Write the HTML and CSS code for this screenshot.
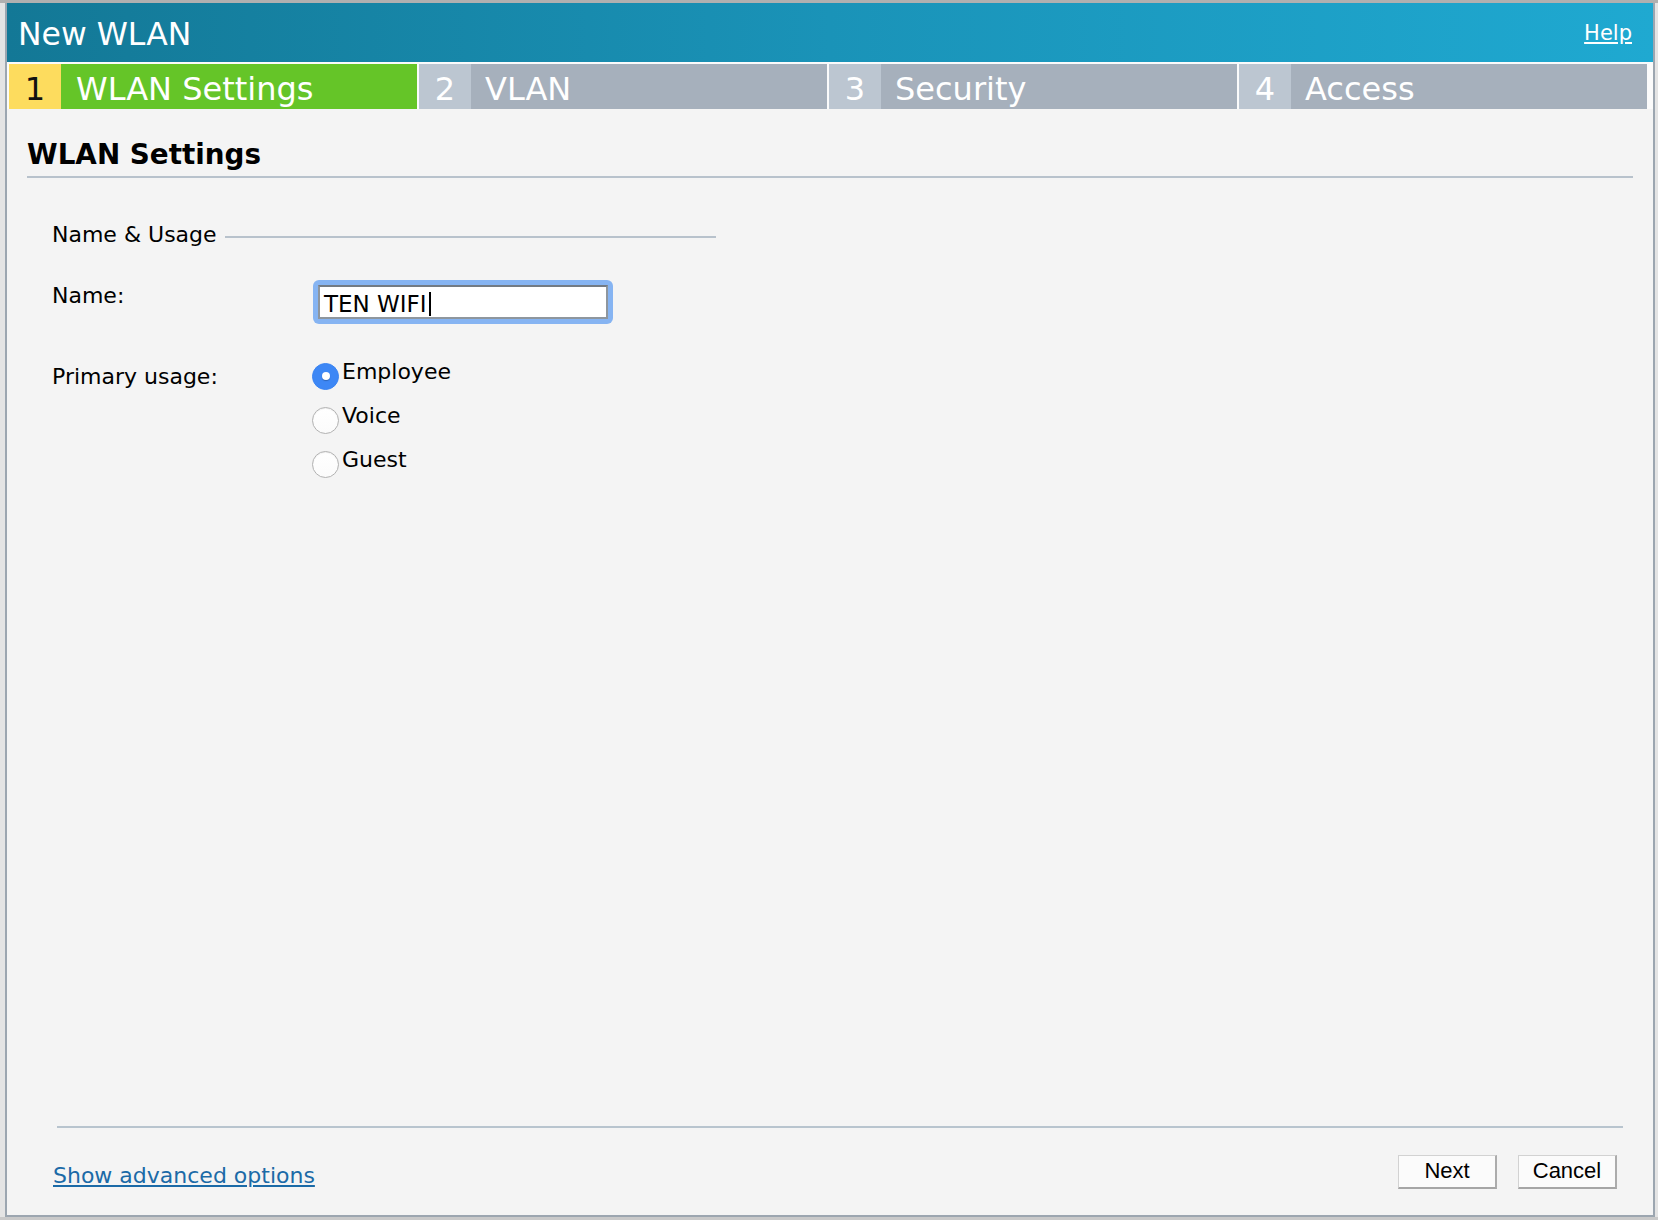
FILE: index.html
```html
<!DOCTYPE html>
<html lang="en">
<head>
<meta charset="utf-8">
<title>New WLAN</title>
<link rel="stylesheet" href="styles.css">
</head>
<body>
<div class="dialog">
  <div class="header">
    <div class="title">New WLAN</div>
    <a class="help" href="#">Help</a>
  </div>
  <div class="tabbar">
    <div class="tab active"><span class="num">1</span><span class="label">WLAN Settings</span></div>
    <div class="tab"><span class="num">2</span><span class="label">VLAN</span></div>
    <div class="tab"><span class="num">3</span><span class="label">Security</span></div>
    <div class="tab"><span class="num">4</span><span class="label">Access</span></div>
  </div>
  <div class="content">
    <h1 class="page-title">WLAN Settings</h1>
    <div class="fieldset">
      <div class="legend"><span class="legend-text">Name &amp; Usage</span><span class="legend-rule"></span></div>
      <div class="form">
        <div class="form-label first">Name:</div>
        <div class="focus-ring"><div class="field"><span class="field-text">TEN WIFI</span><span class="caret"></span></div></div>
        <div class="form-label second">Primary usage:</div>
        <div class="radios">
          <div class="radio-row"><span class="radio checked"></span><span class="radio-text">Employee</span></div>
          <div class="radio-row"><span class="radio"></span><span class="radio-text">Voice</span></div>
          <div class="radio-row"><span class="radio"></span><span class="radio-text">Guest</span></div>
        </div>
      </div>
    </div>
  </div>
  <div class="footer-rule"></div>
  <div class="footer">
    <a class="advanced" href="#">Show advanced options</a>
    <div class="buttons">
      <button class="btn">Next</button>
      <button class="btn">Cancel</button>
    </div>
  </div>
</div>
</body>
</html>
```

FILE: styles.css
```css
html, body {
  margin: 0;
  padding: 0;
}

body {
  width: 1658px;
  height: 1220px;
  overflow: hidden;
  position: relative;
  background: linear-gradient(#b0b0b0 0, #b0b0b0 3px, #e4e4e4 3px, #e4e4e4 1217px, #c9c9c9 1217px);
  font-family: "DejaVu Sans", Verdana, sans-serif;
  color: #000;
}

.dialog {
  position: relative;
  z-index: 1;
  margin: 3px 0 0 5px;
  width: 1650px;
  height: 1214px;
  box-sizing: border-box;
  border: 2px solid #9ca6b0;
  border-top: 0;
  background: #f4f4f4;
  display: flex;
  flex-direction: column;
}

.header {
  height: 59px;
  box-sizing: border-box;
  padding: 4px 21px 0 11px;
  display: flex;
  justify-content: space-between;
  align-items: flex-start;
  background: linear-gradient(to right, #137896, #1a93b8 50%, #1fa9d1);
  color: #fff;
}

.title {
  font-size: 31.5px;
  line-height: 55px;
}

.help {
  font-size: 21px;
  line-height: 53px;
  color: #fff;
  text-decoration: underline;
  text-underline-offset: 2px;
}

.tabbar {
  height: 47px;
  box-sizing: border-box;
  padding: 2px 0 0 2px;
  background: #fbfbfb;
  display: flex;
  gap: 2px;
}

.tab {
  width: 408px;
  height: 45px;
  display: flex;
  font-size: 32px;
  line-height: 50px;
  color: #fff;
  background: #a6b0bc;
  overflow: hidden;
}

.tab .num {
  width: 52px;
  flex: none;
  text-align: center;
  background: #bcc6d1;
}

.tab .label {
  padding-left: 14px;
  white-space: nowrap;
}

.tab.active {
  background: #65c528;
}

.tab.active .num {
  background: #fddc5e;
  color: #111;
}

.tab.active .label {
  padding-left: 15px;
}

.content {
  flex: 1;
  padding: 29.5px 20px 0;
}

.page-title {
  margin: 0;
  font-size: 27.8px;
  font-weight: bold;
  line-height: 32px;
  padding-bottom: 5.5px;
  border-bottom: 2px solid #b8c2cc;
}

.fieldset {
  margin: 42.5px 0 0 25px;
  width: 664px;
}

.legend {
  display: flex;
  align-items: center;
  height: 26px;
  font-size: 22px;
  line-height: 26px;
}

.legend-text {
  white-space: nowrap;
  padding: 2px 8px 0 0;
}

.legend-rule {
  flex: 1;
  height: 2px;
  margin-top: 6px;
  background: #b8c2cc;
}

.form {
  margin-top: 33.5px;
  display: grid;
  grid-template-columns: 261px auto;
  row-gap: 34.4px;
  align-items: start;
}

.form-label {
  font-size: 22px;
  line-height: 26px;
}

.form-label.first {
  margin-top: 3px;
}

.form-label.second {
  margin-top: 6px;
}

.focus-ring {
  width: 300px;
  height: 44px;
  box-sizing: border-box;
  padding: 5px;
  border-radius: 6px;
  background: #86b4f2;
}

.field {
  height: 34px;
  box-sizing: border-box;
  padding: 3px 0 0 4px;
  border: 2px solid #8e969e;
  border-top-color: #737b84;
  background: #fff;
  display: flex;
  align-items: center;
}

.field-text {
  font-size: 23px;
  line-height: 26px;
  white-space: nowrap;
}

.caret {
  width: 2px;
  height: 24px;
  margin-left: 2px;
  background: #000;
}

.radios {
  display: flex;
  flex-direction: column;
  padding-top: 1px;
}

.radio-row {
  height: 44px;
  display: flex;
  align-items: flex-start;
  font-size: 22px;
  line-height: 26px;
}

.radio {
  width: 27px;
  height: 27px;
  box-sizing: border-box;
  margin: 3.6px 3px 0 -1px;
  border-radius: 50%;
  border: 1px solid #b2b2b2;
  background: linear-gradient(#ffffff, #fbfbfb);
  box-shadow: inset 0 1px 1px rgba(0, 0, 0, 0.06);
  display: flex;
  align-items: center;
  justify-content: center;
  flex: none;
}

.radio.checked {
  border-color: #3a84f2;
  background: #3d87f5;
  box-shadow: none;
}

.radio.checked::after {
  content: "";
  width: 8px;
  height: 8px;
  border-radius: 50%;
  background: #fff;
  box-shadow: 0 1px 1px rgba(0, 0, 0, 0.25);
}

.footer-rule {
  height: 2px;
  margin: 0 30px 0 50px;
  background: #b8c4ce;
}

.footer {
  margin-top: 27px;
  padding: 0 36px 26px 46px;
  display: flex;
  justify-content: space-between;
  align-items: flex-start;
}

.advanced {
  margin-top: 8.4px;
  font-size: 22px;
  line-height: 26px;
  color: #1b6aa7;
  text-decoration: underline;
  text-underline-offset: 2px;
}

.buttons {
  display: flex;
  gap: 21px;
}

.btn {
  width: 99px;
  height: 34px;
  box-sizing: border-box;
  margin: 0;
  padding: 0;
  border: 1px solid #d2d2d2;
  border-right: 2px solid #acacac;
  border-bottom: 2px solid #a6a6a6;
  background: #fbfbfb;
  font-family: "Liberation Sans", Arial, sans-serif;
  font-size: 22px;
  color: #000;
}
```
